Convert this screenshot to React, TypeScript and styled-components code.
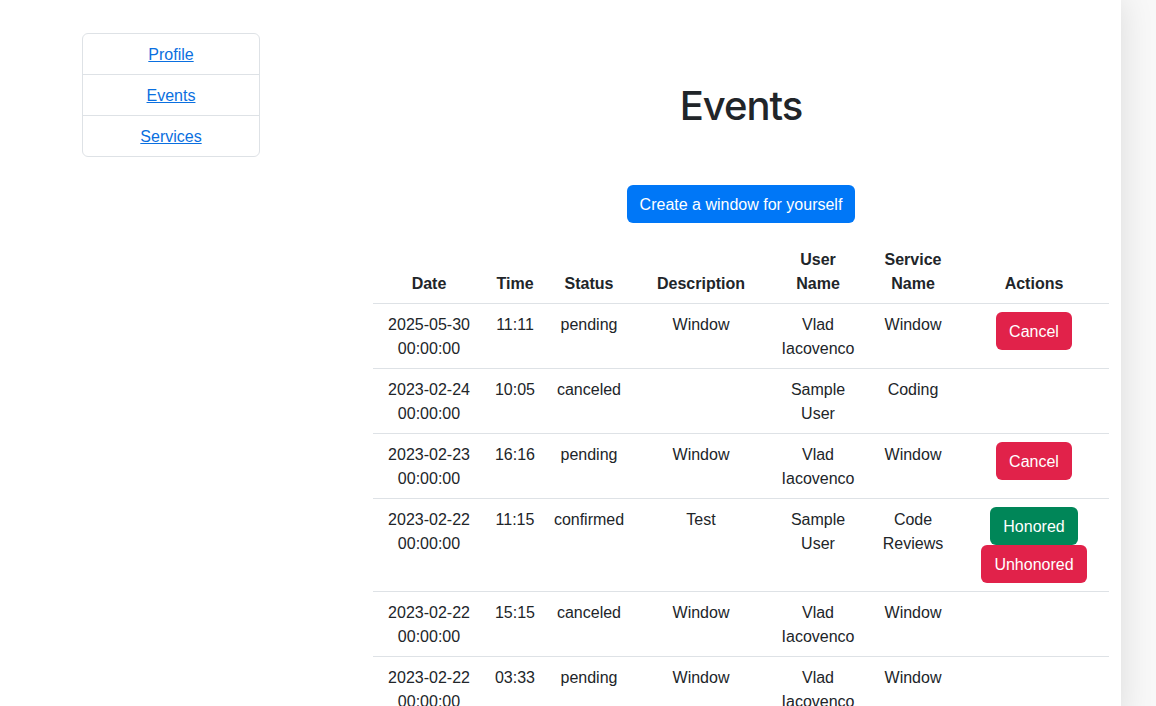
import React from 'react'
import styled, { createGlobalStyle } from 'styled-components'

const GlobalStyle = createGlobalStyle`
  body {
    margin: 0;
    background: #f8f8f8;
    font-family: "Liberation Sans", Arial, sans-serif;
    font-size: 16px;
    line-height: 24px;
    color: #212529;
  }
`

const Page = styled.div`
  width: 1121px;
  min-height: 706px;
  display: flex;
  background: #fff;
  box-shadow: 0 0 32px rgba(0, 0, 0, 0.12);
`

const Sidebar = styled.nav`
  padding: 33px 0 0 82px;
  flex: 0 0 178px;
`

const NavList = styled.ul`
  list-style: none;
  margin: 0;
  padding: 0;
  border: 1px solid #dee2e6;
  border-radius: 6px;
`

const NavItem = styled.li`
  padding: 9px 16px 7px;
  text-align: center;
  & + & {
    border-top: 1px solid #dee2e6;
  }
`

const NavLink = styled.a`
  color: #0a6fe0;
  text-decoration: underline;
`

const Main = styled.main`
  flex: 1;
  min-width: 0;
  padding: 0 12px 0 113px;
  display: flex;
  flex-direction: column;
  align-items: center;
`

const Title = styled.h1`
  margin: 82px 0 55px;
  font-family: Inter, "Liberation Sans", sans-serif;
  font-size: 40px;
  line-height: 48px;
  font-weight: 500;
  letter-spacing: -1px;
`

const Button = styled.button<{ $variant?: 'primary' | 'danger' | 'success' }>`
  font-family: inherit;
  font-size: 16px;
  line-height: 24px;
  padding: 7px 12px 5px;
  border: 1px solid transparent;
  border-radius: 6px;
  color: #fff;
  cursor: pointer;
  display: block;
  margin: 0 auto;
  background: ${p =>
    p.$variant === 'danger' ? '#e1224a' : p.$variant === 'success' ? '#008658' : '#0077f7'};
`

const Table = styled.table`
  margin-top: 16px;
  width: 736px;
  border-collapse: collapse;
  table-layout: fixed;
`

const Th = styled.th<{ $w: number }>`
  box-sizing: border-box;
  width: ${p => p.$w}px;
  padding: 9px 8px 7px;
  text-align: center;
  vertical-align: bottom;
  font-weight: 700;
  border-bottom: 1px solid #dee2e6;
`

const Td = styled.td`
  padding: 9px 8px 7px;
  text-align: center;
  vertical-align: top;
  border-bottom: 1px solid #dee2e6;
`

const ActionCell = styled(Td)`
  padding: 8px;
`

type Row = {
  date: string
  time: string
  status: string
  description: string
  user: string
  service: string
  actions: 'cancel' | 'honor' | null
}

const rows: Row[] = [
  { date: '2025-05-30 00:00:00', time: '11:11', status: 'pending', description: 'Window', user: 'Vlad Iacovenco', service: 'Window', actions: 'cancel' },
  { date: '2023-02-24 00:00:00', time: '10:05', status: 'canceled', description: '', user: 'Sample User', service: 'Coding', actions: null },
  { date: '2023-02-23 00:00:00', time: '16:16', status: 'pending', description: 'Window', user: 'Vlad Iacovenco', service: 'Window', actions: 'cancel' },
  { date: '2023-02-22 00:00:00', time: '11:15', status: 'confirmed', description: 'Test', user: 'Sample User', service: 'Code Reviews', actions: 'honor' },
  { date: '2023-02-22 00:00:00', time: '15:15', status: 'canceled', description: 'Window', user: 'Vlad Iacovenco', service: 'Window', actions: null },
  { date: '2023-02-22 00:00:00', time: '03:33', status: 'pending', description: 'Window', user: 'Vlad Iacovenco', service: 'Window', actions: null },
]

const columns: [string, number][] = [
  ['Date', 112],
  ['Time', 60],
  ['Status', 88],
  ['Description', 136],
  ['User Name', 98],
  ['Service Name', 92],
  ['Actions', 150],
]

export default function App() {
  return (
    <>
      <GlobalStyle />
      <Page>
        <Sidebar>
          <NavList>
            <NavItem><NavLink href="#">Profile</NavLink></NavItem>
            <NavItem><NavLink href="#">Events</NavLink></NavItem>
            <NavItem><NavLink href="#">Services</NavLink></NavItem>
          </NavList>
        </Sidebar>
        <Main>
          <Title>Events</Title>
          <Button $variant="primary">Create a window for yourself</Button>
          <Table>
            <thead>
              <tr>
                {columns.map(([name, w]) => (
                  <Th key={name} $w={w}>{name}</Th>
                ))}
              </tr>
            </thead>
            <tbody>
              {rows.map((r, i) => (
                <tr key={i}>
                  <Td>{r.date}</Td>
                  <Td>{r.time}</Td>
                  <Td>{r.status}</Td>
                  <Td>{r.description}</Td>
                  <Td>{r.user}</Td>
                  <Td>{r.service}</Td>
                  <ActionCell>
                    {r.actions === 'cancel' && <Button $variant="danger">Cancel</Button>}
                    {r.actions === 'honor' && (
                      <>
                        <Button $variant="success">Honored</Button>
                        <Button $variant="danger">Unhonored</Button>
                      </>
                    )}
                  </ActionCell>
                </tr>
              ))}
            </tbody>
          </Table>
        </Main>
      </Page>
    </>
  )
}
